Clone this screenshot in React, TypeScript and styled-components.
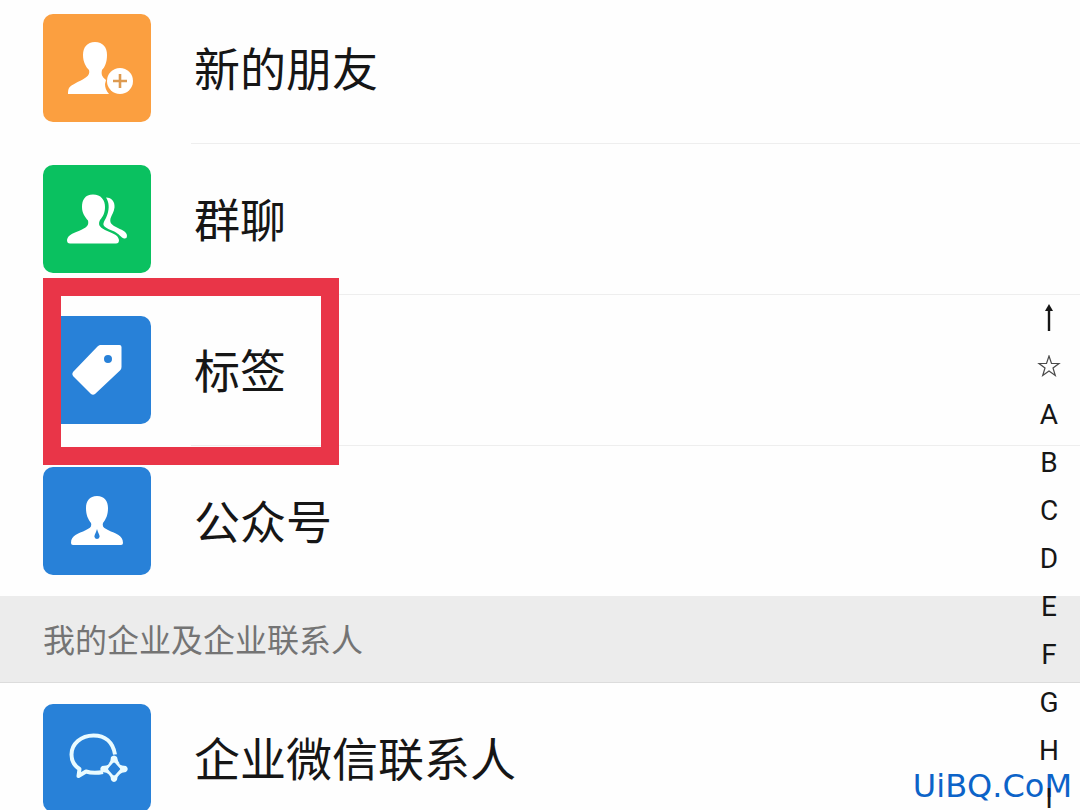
import React from "react";
import styled, { createGlobalStyle } from "styled-components";

const GlobalStyle = createGlobalStyle`
  * { box-sizing: border-box; }
  html, body { margin: 0; padding: 0; background: #fefefe; }
  body { font-family: "Noto Sans CJK SC", "Noto Sans", sans-serif; color: #161616; }
`;

const Screen = styled.main`
  position: relative;
  height: 100vh;
  overflow: hidden;
  background: #fefefe;
`;

const List = styled.ul`
  list-style: none;
  margin: 0;
  padding: 0;
`;

const MainList = styled(List)`
  display: grid;
  row-gap: 1px;
  margin-top: -7px;
`;

const Item = styled.li`
  position: relative;
`;

const RowLink = styled.a`
  display: flex;
  align-items: stretch;
  gap: 40px;
  padding-left: 43px;
  color: inherit;
  text-decoration: none;
`;

const Tile = styled.span<{ $color: string }>`
  flex: none;
  width: 108px;
  height: 108px;
  margin: 21px 0;
  border-radius: 10px;
  background: ${(p) => p.$color};

  svg { display: block; width: 108px; height: 108px; }
`;

const Label = styled.span<{ $divider?: boolean }>`
  flex: 1;
  display: flex;
  align-items: center;
  padding: 0 0 4px 3px;
  border-bottom: ${(p) => (p.$divider ? "1px solid #eeeeee" : "0")};
  margin-bottom: ${(p) => (p.$divider ? "-1px" : "0")};
  font-size: 46px;
  line-height: 64px;
`;

const Highlight = styled.div`
  position: absolute;
  top: -17px;
  left: 43px;
  width: 296px;
  height: 187px;
  border: 18px solid #e93548;
  pointer-events: none;
`;

const SectionTitle = styled.h2`
  margin: 0;
  padding: 18px 43px 20px;
  border-bottom: 1px solid #dcdcdc;
  background: #ececec;
  color: #747474;
  font-size: 32px;
  font-weight: 400;
  line-height: 48px;
`;

const IndexBar = styled.nav`
  position: absolute;
  top: 295px;
  right: 7px;
  z-index: 2;
  display: flex;
  flex-direction: column;
`;

const IndexButton = styled.button`
  display: flex;
  align-items: center;
  justify-content: center;
  width: 48px;
  height: 48px;
  padding: 0;
  border: 0;
  background: transparent;
  color: #161616;
  font: 400 28px/48px Roboto, sans-serif;
`;

const Watermark = styled.span`
  position: absolute;
  right: 8px;
  bottom: 2px;
  z-index: 1;
  color: #0c63c8;
  font: 400 32px/44px "DejaVu Sans", "Noto Sans", sans-serif;
`;

const NewFriendIcon = () => (
  <svg viewBox="0 0 108 108" fill="#fff" aria-hidden="true">
    <path d="M52 28C44 28 40 33.500 40 41C40 48 43 53 46 56C47 60 45 62 42 64C36 68 29 70 26 74C25 76 25 78 25 80H66C63 77 62 73 62 70L63 66C59 63 58 60 59 56C62 53 64 48 64 41C64 33.500 60 28 52 28Z" />
    <circle cx="77" cy="67" r="13" />
    <path d="M77 60V74M70 67H84" stroke="#dd9a50" strokeWidth="2.600" fill="none" />
  </svg>
);

const GroupIcon = () => (
  <svg viewBox="0 0 108 108" fill="#fff" aria-hidden="true">
    <path d="M63 32.500C69 32.500 72 37 71.500 42.500C71 47 68.500 50 67.500 53.500C66.500 58 69 60 73 62C78 65 84 66 84 71Q84 74 81 73.500C78 72.500 77 70 73 67.500C69 65 62 63.500 60.500 60C60 57 63 54 64.500 49C66.500 43 66 37 63 32.500Z" />
    <path d="M50 29.500C42 29.500 39 35 39 42C39 48 42 52 45 55.500C46 60 44 62 39 64.500C32 68 25 69 24 75Q24 78.500 27 78.500H73Q76 78.500 76 75C75 69 68 68 62 65C56 62 55 59 57 55C60 51.500 62 48 62 42C62 35 58 29.500 50 29.500Z" />
  </svg>
);

const TagIcon = () => (
  <svg viewBox="0 0 108 108" aria-hidden="true">
    <path
      fill="#fff"
      fillRule="evenodd"
      d="M57 29H76.500Q78.500 29 78.500 31V51Q78.500 53 77 54.500L52 78Q50 79.500 48 78L30 60Q28.500 58 30 56L54.500 30.500Q56 29 57 29ZM65 39A4 4 0 1 0 65 47A4 4 0 1 0 65 39Z"
    />
  </svg>
);

const OfficialIcon = () => (
  <svg viewBox="0 0 108 108" aria-hidden="true">
    <path
      fill="#fff"
      fillRule="evenodd"
      d="M54 29C46.500 29 43 34 43 41C43 48 45 52 48 56C49 60 47 61 43 63C35 67 28 68 28 76Q28 78 30 78H78Q80 78 80 76C80 68 73 67 65 63C61 61 59 60 60 56C63 52 65 48 65 41C65 34 61.500 29 54 29ZM54 62L55 65Q57 69 56.500 70Q56 72 54 72Q52 72 51.500 70Q51 69 53 65Z"
    />
  </svg>
);

const WorkChatIcon = () => (
  <svg viewBox="0 0 108 108" fill="none" stroke="#e9fbff" aria-hidden="true">
    <path
      d="M72 50.500C70 38 62 31.500 50.500 31.500C38 31.500 28.500 40 28.500 50.500C28.500 57 31 61.500 36.500 65L35.500 72L43 67.500C49 69.500 55 69 60 68"
      strokeWidth="4"
      strokeLinejoin="round"
    />
    <path d="M71 56L63 65L71 74L79 65Z" strokeWidth="2.400" />
    <g fill="#e9fbff" stroke="none">
      <path d="M68 53Q71 50 74 53Q74.500 57 77 60L71 58.500L65.500 60Q68 57 68 53Z" />
      <path d="M59 62Q55.500 65 59 68Q63.500 68 67 71L65 65L67 60Q63.500 62 59 62Z" />
      <path d="M68 76Q71 80 74 76Q74 72.500 77 70L71 71.500L65.500 70Q68 72.500 68 76Z" />
      <path d="M83 62Q86.500 65 83 68Q79 68 75.500 71L77.500 65L75.500 60Q79 62 83 62Z" />
    </g>
  </svg>
);

const ArrowIcon = () => (
  <svg width="12" height="30" viewBox="0 0 12 30" aria-hidden="true">
    <path d="M6 4V27" stroke="#161616" strokeWidth="2.400" />
    <path d="M6 0L10 7H2Z" fill="#161616" />
  </svg>
);

const StarIcon = () => (
  <svg width="24" height="24" viewBox="0 0 24 24" aria-hidden="true">
    <path
      d="M12 1L14.500 8.500H22L16 13L18.300 20.500L12 16L5.700 20.500L8 13L2 8.500H9.500Z"
      fill="none"
      stroke="#4a4a4a"
      strokeWidth="1.200"
    />
  </svg>
);

type Entry = { label: string; color: string; icon: React.ReactNode; highlighted?: boolean };

const entries: Entry[] = [
  { label: "新的朋友", color: "#fb9f40", icon: <NewFriendIcon /> },
  { label: "群聊", color: "#0ac160", icon: <GroupIcon /> },
  { label: "标签", color: "#2881d8", icon: <TagIcon />, highlighted: true },
  { label: "公众号", color: "#2881d8", icon: <OfficialIcon /> },
];

const letters = ["A", "B", "C", "D", "E", "F", "G", "H", "I"];

function ContactRow({ entry, divider }: { entry: Entry; divider?: boolean }) {
  return (
    <Item>
      <RowLink href="#">
        <Tile $color={entry.color}>{entry.icon}</Tile>
        <Label $divider={divider}>{entry.label}</Label>
      </RowLink>
      {entry.highlighted && <Highlight />}
    </Item>
  );
}

export default function App() {
  return (
    <>
      <GlobalStyle />
      <Screen>
        <MainList>
          {entries.map((entry, i) => (
            <ContactRow key={entry.label} entry={entry} divider={i < entries.length - 1} />
          ))}
        </MainList>
        <SectionTitle>我的企业及企业联系人</SectionTitle>
        <List>
          <ContactRow entry={{ label: "企业微信联系人", color: "#2881d8", icon: <WorkChatIcon /> }} />
        </List>
        <IndexBar aria-label="索引">
          <IndexButton aria-label="顶部"><ArrowIcon /></IndexButton>
          <IndexButton aria-label="星标"><StarIcon /></IndexButton>
          {letters.map((l) => (
            <IndexButton key={l}>{l}</IndexButton>
          ))}
        </IndexBar>
        <Watermark>UiBQ.CoM</Watermark>
      </Screen>
    </>
  );
}
